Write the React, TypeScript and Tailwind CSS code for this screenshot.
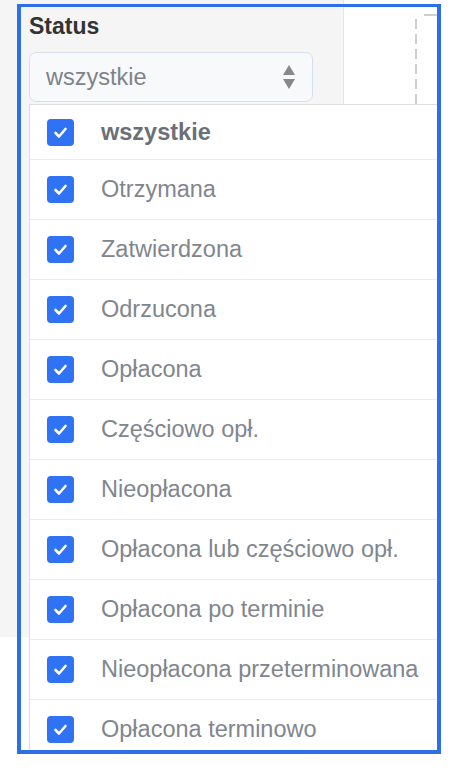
import React from "react";

const statuses = [
  "Otrzymana",
  "Zatwierdzona",
  "Odrzucona",
  "Opłacona",
  "Częściowo opł.",
  "Nieopłacona",
  "Opłacona lub częściowo opł.",
  "Opłacona po terminie",
  "Nieopłacona przeterminowana",
  "Opłacona terminowo",
];

function Check() {
  return (
    <span className="flex h-[27px] w-[27px] shrink-0 items-center justify-center rounded-[4px] bg-[#2f72f4]">
      <svg width="17" height="17" viewBox="0 0 17 17" fill="none">
        <path d="M3.5 9 L7 12.5 L13.5 5" stroke="white" strokeWidth="2.6" strokeLinecap="round" strokeLinejoin="round" />
      </svg>
    </span>
  );
}

function Row({ label, bold, first }: { label: string; bold?: boolean; first?: boolean }) {
  return (
    <li
      className={
        "flex items-center gap-[27px] border-b border-[#ececec] pl-[17px] " +
        (first ? "h-[55px]" : "h-[60px]")
      }
    >
      <Check />
      <span
        className={
          "whitespace-nowrap text-[23.5px] leading-[23px] " +
          (bold ? "font-bold text-[#6a7078]" : "text-[#80868e]")
        }
      >
        {label}
      </span>
    </li>
  );
}

export default function App() {
  return (
    <div className="relative h-[771px] w-[460px] overflow-hidden bg-white font-['Liberation_Sans',Arial,sans-serif]">
      <div className="flex">
        <div className="h-[637px] w-[344px] shrink-0 border-r border-[#e6e6e6] bg-[#f5f5f5] pl-[29px] pt-[15px]">
          <div className="text-[23px] font-bold leading-[23px] text-[#333]">Status</div>
          <div className="mt-[14px] flex h-[50px] w-[284px] items-center justify-between rounded-[7px] border border-[#d6e0ea] bg-[#f8f9fa] pl-[16px] pr-[16px]">
            <span className="text-[23.5px] leading-[23px] text-[#7d838b]">wszystkie</span>
            <svg width="14" height="26" viewBox="0 0 14 26">
              <path d="M7 1 L13 11 L1 11 Z" fill="#888" />
              <path d="M1 15 L13 15 L7 25 Z" fill="#888" />
            </svg>
          </div>
        </div>
        <div className="relative flex-1">
          <svg width="116" height="110" viewBox="0 0 116 110">
            <line x1="72" y1="19" x2="72" y2="110" stroke="#cfcfcf" strokeWidth="2" strokeDasharray="10 5" />
            <line x1="80" y1="15" x2="94" y2="15" stroke="#cfcfcf" strokeWidth="2" />
          </svg>
        </div>
      </div>

      <ul className="absolute left-[29px] top-[104px] h-[646px] w-[408px] overflow-hidden border-l border-t border-[#dedede] bg-white">
        <Row label="wszystkie" bold first />
        {statuses.map((s) => (
          <Row key={s} label={s} />
        ))}
      </ul>

      <div className="pointer-events-none absolute left-[17px] top-[4px] h-[750px] w-[424px] border-x-4 border-b-4 border-t-[3px] border-[#2c6fe6]" />
    </div>
  );
}
